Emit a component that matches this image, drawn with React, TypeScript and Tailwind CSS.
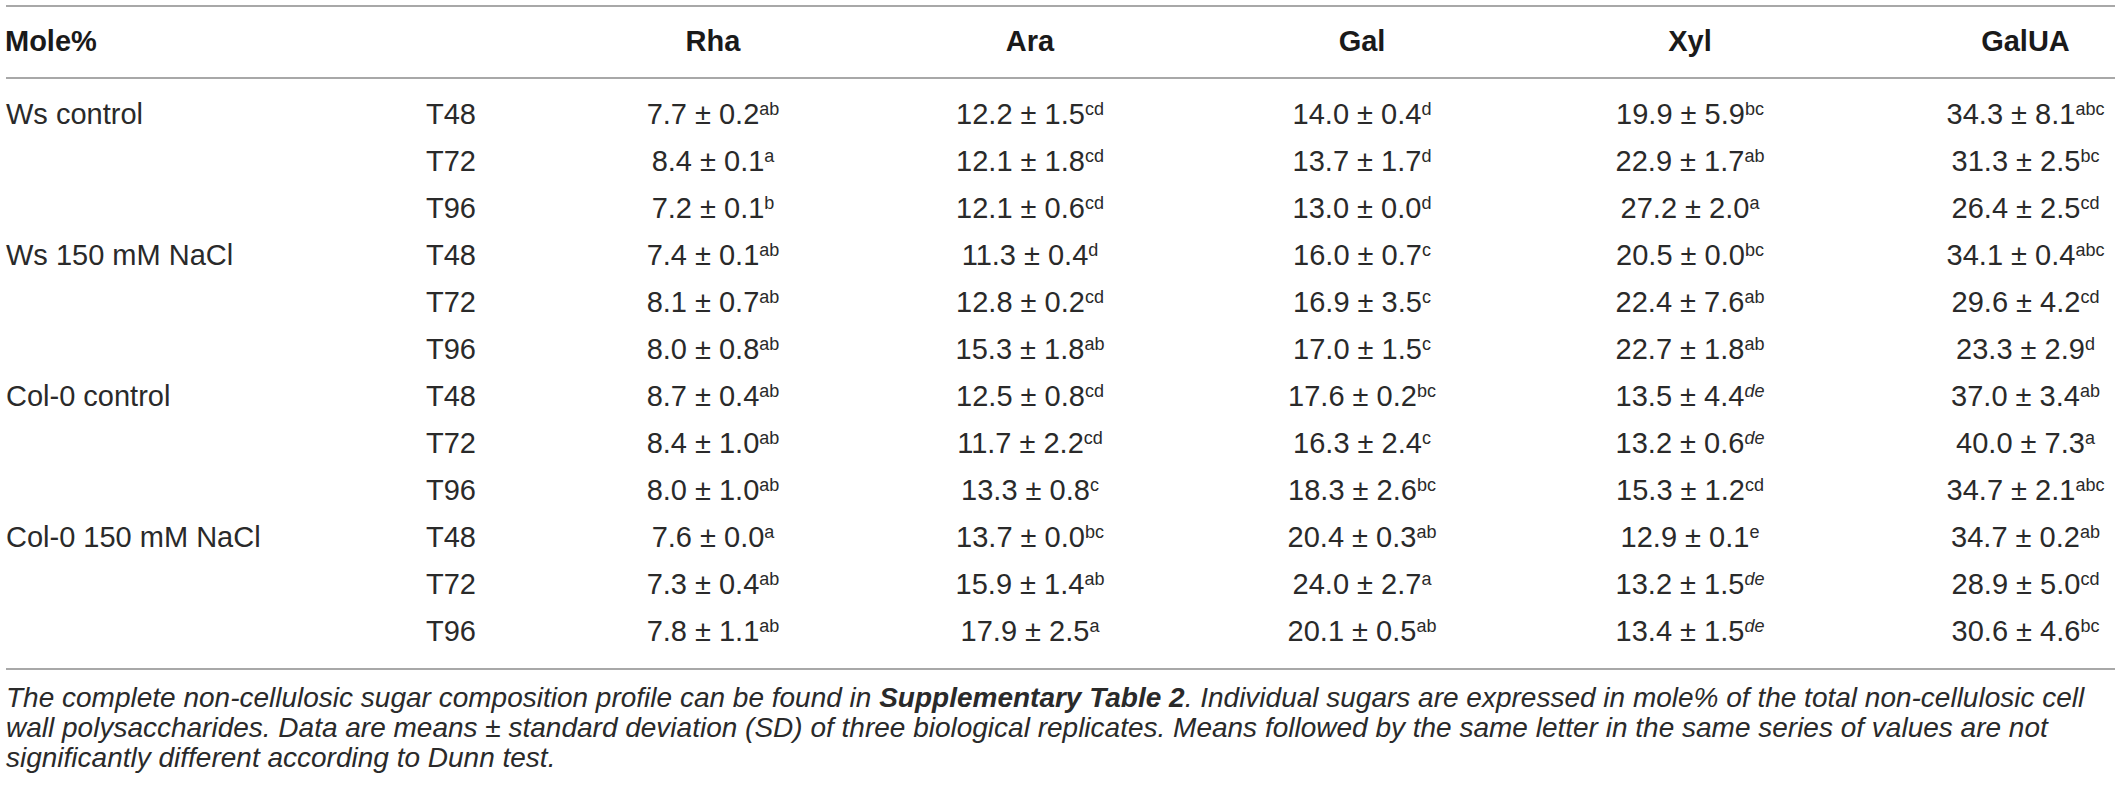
type Cell = { v: string; sup: string; it?: boolean };

interface Row {
  group?: string;
  time: string;
  cells: Cell[];
}

const c = (v: string, sup: string, it = false): Cell => ({ v, sup, it });

const rows: Row[] = [
  { group: 'Ws control', time: 'T48', cells: [c('7.7 ± 0.2', 'ab'), c('12.2 ± 1.5', 'cd'), c('14.0 ± 0.4', 'd'), c('19.9 ± 5.9', 'bc'), c('34.3 ± 8.1', 'abc')] },
  { time: 'T72', cells: [c('8.4 ± 0.1', 'a'), c('12.1 ± 1.8', 'cd'), c('13.7 ± 1.7', 'd'), c('22.9 ± 1.7', 'ab'), c('31.3 ± 2.5', 'bc')] },
  { time: 'T96', cells: [c('7.2 ± 0.1', 'b'), c('12.1 ± 0.6', 'cd'), c('13.0 ± 0.0', 'd'), c('27.2 ± 2.0', 'a'), c('26.4 ± 2.5', 'cd')] },
  { group: 'Ws 150 mM NaCl', time: 'T48', cells: [c('7.4 ± 0.1', 'ab'), c('11.3 ± 0.4', 'd'), c('16.0 ± 0.7', 'c'), c('20.5 ± 0.0', 'bc'), c('34.1 ± 0.4', 'abc')] },
  { time: 'T72', cells: [c('8.1 ± 0.7', 'ab'), c('12.8 ± 0.2', 'cd'), c('16.9 ± 3.5', 'c'), c('22.4 ± 7.6', 'ab'), c('29.6 ± 4.2', 'cd')] },
  { time: 'T96', cells: [c('8.0 ± 0.8', 'ab'), c('15.3 ± 1.8', 'ab'), c('17.0 ± 1.5', 'c'), c('22.7 ± 1.8', 'ab'), c('23.3 ± 2.9', 'd')] },
  { group: 'Col-0 control', time: 'T48', cells: [c('8.7 ± 0.4', 'ab'), c('12.5 ± 0.8', 'cd'), c('17.6 ± 0.2', 'bc'), c('13.5 ± 4.4', 'de', true), c('37.0 ± 3.4', 'ab')] },
  { time: 'T72', cells: [c('8.4 ± 1.0', 'ab'), c('11.7 ± 2.2', 'cd'), c('16.3 ± 2.4', 'c'), c('13.2 ± 0.6', 'de', true), c('40.0 ± 7.3', 'a')] },
  { time: 'T96', cells: [c('8.0 ± 1.0', 'ab'), c('13.3 ± 0.8', 'c'), c('18.3 ± 2.6', 'bc'), c('15.3 ± 1.2', 'cd'), c('34.7 ± 2.1', 'abc')] },
  { group: 'Col-0 150 mM NaCl', time: 'T48', cells: [c('7.6 ± 0.0', 'a'), c('13.7 ± 0.0', 'bc'), c('20.4 ± 0.3', 'ab'), c('12.9 ± 0.1', 'e'), c('34.7 ± 0.2', 'ab')] },
  { time: 'T72', cells: [c('7.3 ± 0.4', 'ab'), c('15.9 ± 1.4', 'ab'), c('24.0 ± 2.7', 'a'), c('13.2 ± 1.5', 'de', true), c('28.9 ± 5.0', 'cd')] },
  { time: 'T96', cells: [c('7.8 ± 1.1', 'ab'), c('17.9 ± 2.5', 'a'), c('20.1 ± 0.5', 'ab'), c('13.4 ± 1.5', 'de', true), c('30.6 ± 4.6', 'bc')] },
];

const sugars = ['Rha', 'Ara', 'Gal', 'Xyl', 'GalUA'];

const grid = 'grid grid-cols-[420px_130px_314px_320px_344px_312px_269px] items-center';

function Rule() {
  return <div className="h-[2px] bg-[#a8a8a8]" />;
}

export default function App() {
  return (
    <div className="w-[2119px] h-[792px] bg-white text-[#2a2a2a] pt-[5px] pl-[6px] pr-[4px] font-['Liberation_Sans',Arial,sans-serif]">
      <Rule />
      <div className={`${grid} h-[70px] text-[29px] font-bold text-[#1a1a1a]`}>
        <div className="-ml-[1px]">Mole%</div>
        <div />
        {sugars.map((s, i) => (
          <div key={s} className={i === 4 ? 'pl-[90px] text-center' : 'text-center'}>
            {s}
          </div>
        ))}
      </div>
      <Rule />

      {/* body */}
      <div className="pt-[11px] pb-[14px] text-[29px] leading-[40px]">
        {rows.map((row, r) => (
          <div key={r} className={`${grid} h-[47px]`}>
            <div className="whitespace-nowrap">{row.group ?? ''}</div>
            <div>{row.time}</div>
            {row.cells.map((cell, i) => (
              <div key={i} className={i === 4 ? 'pl-[90px] text-center whitespace-nowrap' : 'text-center whitespace-nowrap'}>
                {cell.v}
                <sup className={`text-[18px] leading-none ${cell.it ? 'italic' : ''}`}>{cell.sup}</sup>
              </div>
            ))}
          </div>
        ))}
      </div>
      <Rule />

      <p className="mt-[13px] text-[28px] leading-[30px] italic pr-[2px]">
        The complete non-cellulosic sugar composition profile can be found in <b>Supplementary Table 2</b>. Individual
        sugars are expressed in mole% of the total non-cellulosic cell wall polysaccharides. Data are means ± standard
        deviation (SD) of three biological replicates. Means followed by the same letter in the same series of values are
        not significantly different according to Dunn test.
      </p>
    </div>
  );
}
